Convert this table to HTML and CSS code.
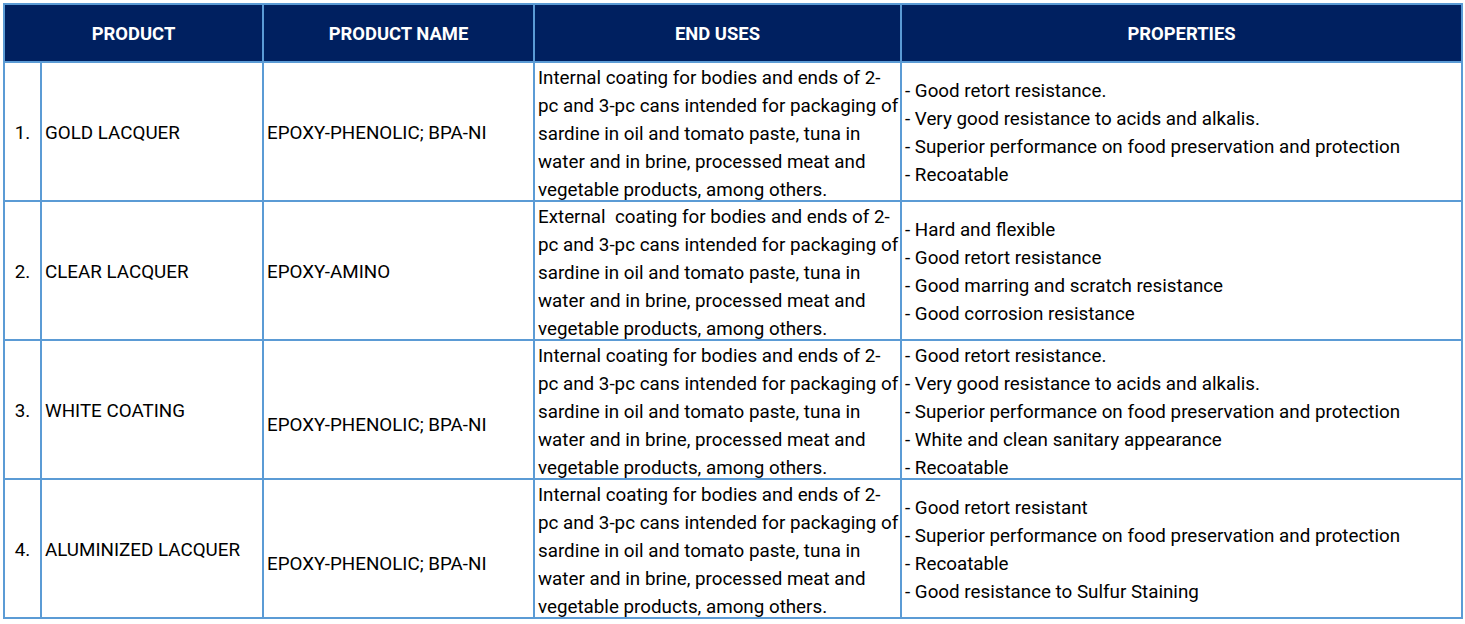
FILE: index.html
```html
<!DOCTYPE html>
<html lang="en">
<head>
<meta charset="utf-8">
<title>Products</title>
<link rel="stylesheet" href="styles.css">
</head>
<body>
<div class="sheet">
  <div class="hd span2">PRODUCT</div>
  <div class="hd">PRODUCT NAME</div>
  <div class="hd">END USES</div>
  <div class="hd">PROPERTIES</div>

  <div class="c num">1.</div>
  <div class="c">GOLD LACQUER</div>
  <div class="c">EPOXY-PHENOLIC; BPA-NI</div>
  <div class="c top uses">Internal coating for bodies and ends of 2-pc and 3-pc cans intended for packaging of sardine in oil and tomato paste, tuna in water and in brine, processed meat and vegetable products, among others.</div>
  <div class="c"><div>- Good retort resistance.</div><div>- Very good resistance to acids and alkalis.</div><div>- Superior performance on food preservation and protection</div><div>- Recoatable</div></div>

  <div class="c num">2.</div>
  <div class="c">CLEAR LACQUER</div>
  <div class="c">EPOXY-AMINO</div>
  <div class="c top uses">External&nbsp; coating for bodies and ends of 2-pc and 3-pc cans intended for packaging of sardine in oil and tomato paste, tuna in water and in brine, processed meat and vegetable products, among others.</div>
  <div class="c"><div>- Hard and flexible</div><div>- Good retort resistance</div><div>- Good marring and scratch resistance</div><div>- Good corrosion resistance</div></div>

  <div class="c num">3.</div>
  <div class="c">WHITE COATING</div>
  <div class="c"><div>&nbsp;</div><div>EPOXY-PHENOLIC; BPA-NI</div></div>
  <div class="c top uses">Internal coating for bodies and ends of 2-pc and 3-pc cans intended for packaging of sardine in oil and tomato paste, tuna in water and in brine, processed meat and vegetable products, among others.</div>
  <div class="c top"><div>- Good retort resistance.</div><div>- Very good resistance to acids and alkalis.</div><div>- Superior performance on food preservation and protection</div><div>- White and clean sanitary appearance</div><div>- Recoatable</div></div>

  <div class="c num">4.</div>
  <div class="c">ALUMINIZED LACQUER</div>
  <div class="c"><div>&nbsp;</div><div>EPOXY-PHENOLIC; BPA-NI</div></div>
  <div class="c top uses">Internal coating for bodies and ends of 2-pc and 3-pc cans intended for packaging of sardine in oil and tomato paste, tuna in water and in brine, processed meat and vegetable products, among others.</div>
  <div class="c"><div>- Good retort resistant</div><div>- Superior performance on food preservation and protection</div><div>- Recoatable</div><div>- Good resistance to Sulfur Staining</div></div>
</div>
</body>
</html>
```

FILE: styles.css
```css
html, body {
  margin: 0;
  padding: 0;
  background: #ffffff;
}
body {
  padding: 3px 0 0 3px;
  font-family: Roboto, "Liberation Sans", sans-serif;
  font-size: 18.8px;
  color: #000000;
}
.sheet {
  display: grid;
  grid-template-columns: 35px 220px 269px 365px 559px;
  grid-template-rows: 56px repeat(4, 137px);
  gap: 2px;
  padding: 2px;
  width: max-content;
  background: #5b9bd5;
}
.hd {
  background: #002060;
  color: #ffffff;
  font-weight: 700;
  font-size: 18.4px;
  display: flex;
  align-items: center;
  justify-content: center;
}
.span2 {
  grid-column: span 2;
}
.c {
  background: #ffffff;
  display: flex;
  flex-direction: column;
  justify-content: center;
  padding: 2px 3px 0;
  line-height: 28px;
  overflow: hidden;
  white-space: normal;
}
.c.top {
  justify-content: flex-start;
  padding-top: 1px;
}
.c.uses {
  padding-right: 0;
}
.c.num {
  align-items: center;
  padding-left: 0;
  padding-right: 0;
}
```
